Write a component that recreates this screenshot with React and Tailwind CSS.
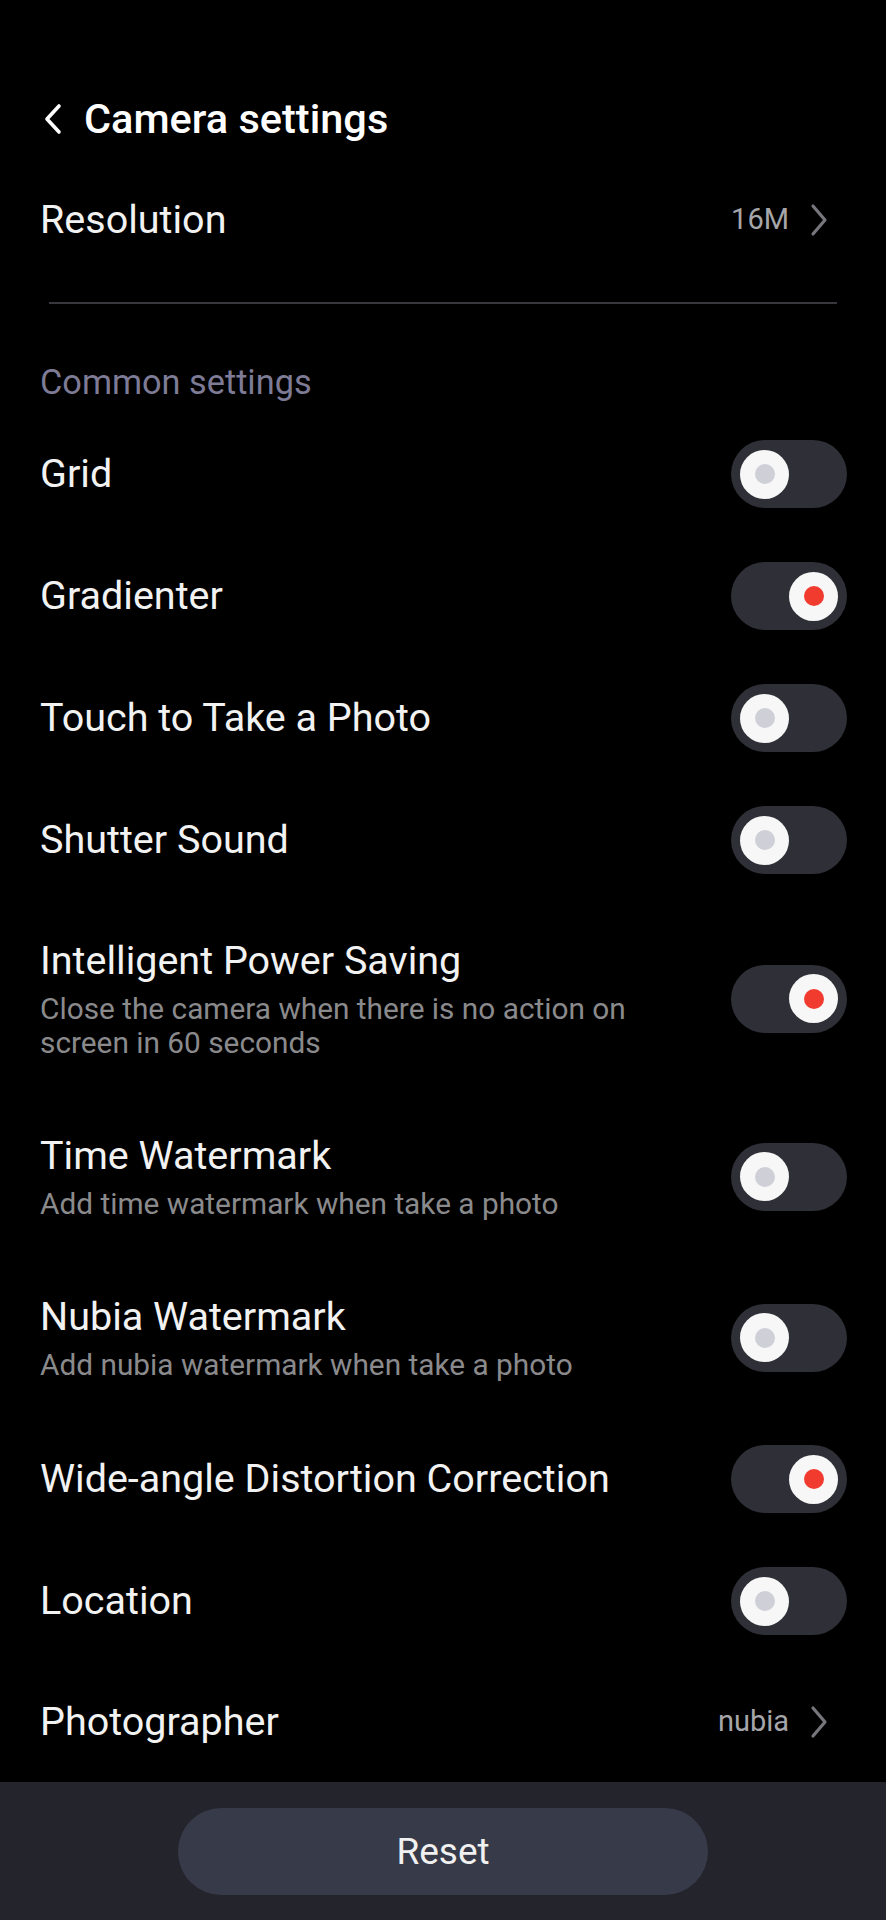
import React from "react";

const font = { fontFamily: "Roboto, 'Noto Sans', sans-serif" };

function Toggle({ on }) {
  return (
    <div
      className={`flex h-[68px] w-[116px] shrink-0 items-center rounded-full bg-[#2f3037] px-[9px] ${
        on ? "justify-end" : "justify-start"
      }`}
    >
      <div className="flex h-[49px] w-[49px] items-center justify-center rounded-full bg-[#f7f7f7]">
        <div className={`h-[20px] w-[20px] rounded-full ${on ? "bg-[#f23b2f]" : "bg-[#cfcfd8]"}`} />
      </div>
    </div>
  );
}

function Chevron() {
  return (
    <svg width="20" height="34" viewBox="0 0 20 34" className="shrink-0">
      <polyline points="4,3 16,17 4,31" fill="none" stroke="#76767c" strokeWidth="3.2" strokeLinecap="round" strokeLinejoin="round" />
    </svg>
  );
}

function SimpleRow({ label, on, h = "h-[122px]" }) {
  return (
    <div className={`flex ${h} items-center justify-between pl-[40px] pr-[39px]`}>
      <span className="text-[39.5px] leading-[48px] text-[#f2f2f2]">{label}</span>
      <Toggle on={on} />
    </div>
  );
}

function SubRow({ label, sub, on }) {
  return (
    <div className="flex items-center justify-between py-[36px] pl-[40px] pr-[39px]">
      <div className="flex flex-col">
        <span className="text-[39.5px] leading-[48px] text-[#f2f2f2]">{label}</span>
        <div className="mt-[7px] flex flex-col">
          {sub.map((s) => (
            <span key={s} className="text-[29.8px] leading-[34px] text-[#8a8a8c]">
              {s}
            </span>
          ))}
        </div>
      </div>
      <Toggle on={on} />
    </div>
  );
}

function ValueRow({ label, value, h }) {
  return (
    <div className={`flex ${h} items-center justify-between pl-[40px] pr-[57px]`}>
      <span className="text-[39.5px] leading-[48px] text-[#f2f2f2]">{label}</span>
      <div className="flex items-center gap-[20px]">
        <span className="text-[29px] text-[#a6a6aa]">{value}</span>
        <Chevron />
      </div>
    </div>
  );
}

export default function App() {
  return (
    <div className="flex min-h-[1920px] w-full flex-col bg-black" style={font}>
      <div className="mt-[84px] flex h-[70px] items-center pl-[42px]">
        <svg width="22" height="32" viewBox="0 0 22 32" className="shrink-0">
          <polyline points="17,3 5,16 17,29" fill="none" stroke="#ffffff" strokeWidth="3.6" strokeLinecap="round" strokeLinejoin="round" />
        </svg>
        <span className="ml-[20px] text-[41.5px] font-medium text-white">Camera settings</span>
      </div>
      <ValueRow label="Resolution" value="16M" h="h-[132px]" />
      <div className="mx-[49px] mt-[16px] h-[2px] bg-[#37373d]" />
      <div className="mt-[49px] flex h-[60px] items-center pl-[40px]">
        <span className="text-[34.3px] text-[#7d7b95]">Common settings</span>
      </div>
      <SimpleRow label="Grid" on={false} />
      <SimpleRow label="Gradienter" on={true} />
      <SimpleRow label="Touch to Take a Photo" on={false} />
      <SimpleRow label="Shutter Sound" on={false} />
      <SubRow
        label="Intelligent Power Saving"
        sub={["Close the camera when there is no action on", "screen in 60 seconds"]}
        on={true}
      />
      <SubRow label="Time Watermark" sub={["Add time watermark when take a photo"]} on={false} />
      <SubRow label="Nubia Watermark" sub={["Add nubia watermark when take a photo"]} on={false} />
      <SimpleRow label="Wide-angle Distortion Correction" on={true} />
      <SimpleRow label="Location" on={false} />
      <ValueRow label="Photographer" value="nubia" h="h-[120px]" />
      <div className="flex flex-1 items-start justify-center bg-[#23242c] pt-[26px]">
        <button className="flex h-[87px] w-[530px] items-center justify-center rounded-full bg-[#373a48] text-[37px] text-[#f0f0f0]">
          Reset
        </button>
      </div>
    </div>
  );
}
